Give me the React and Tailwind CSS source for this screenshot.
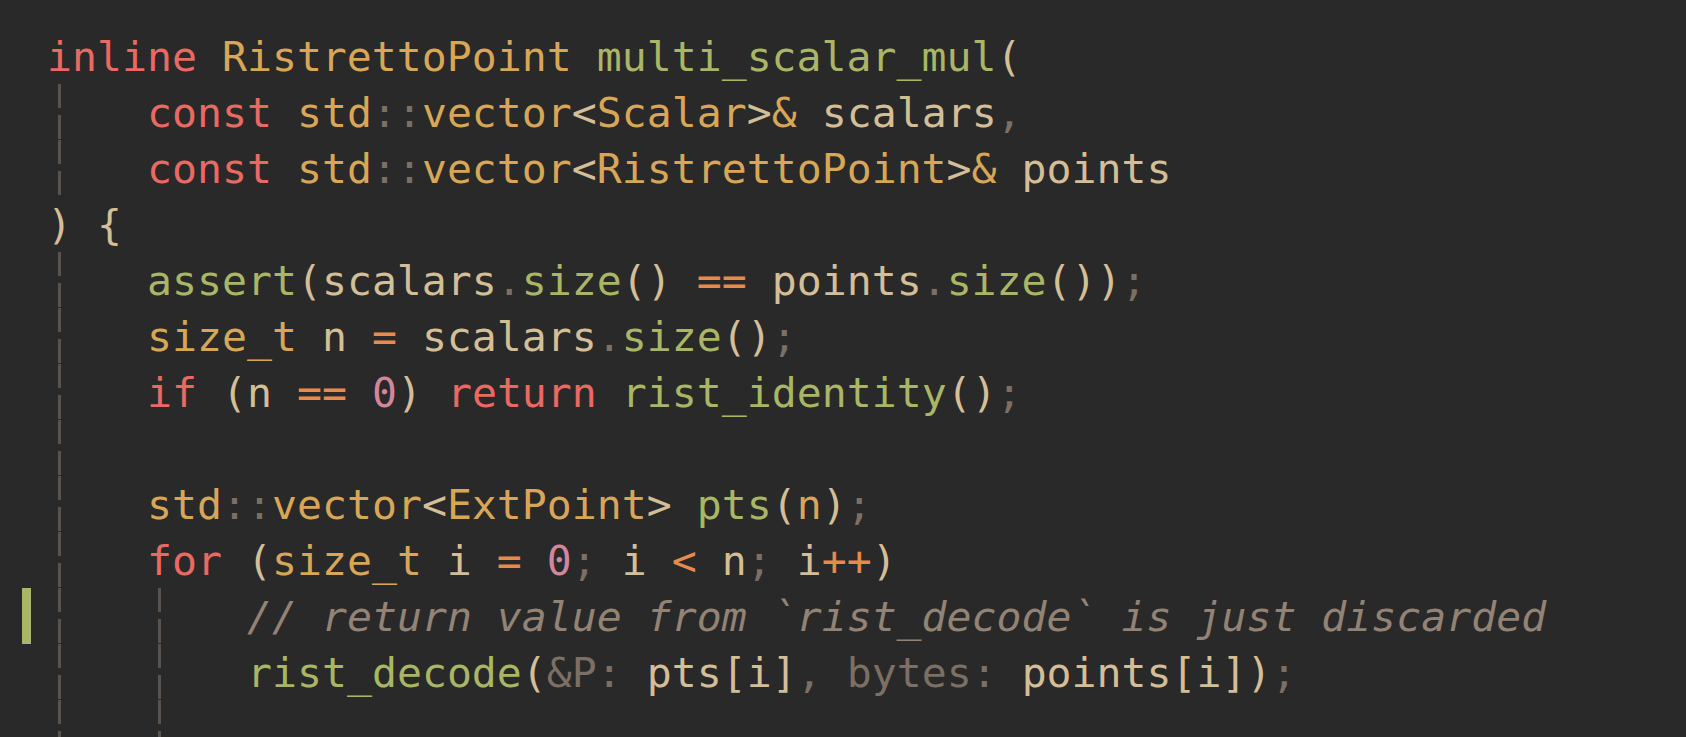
import React from "react";

// gruvbox-material-ish palette
const kw = "text-[#ea6962]";
const ty = "text-[#d8a657]";
const fn = "text-[#a9b665]";
const op = "text-[#e78a4e]";
const num = "text-[#d3869b]";
const fg = "text-[#d4be98]";
const pu = "text-[#7c6f64]";
const cm = "text-[#928374] italic";
const hint = "text-[#7c6f64]";

const lines = [
  { level: 0, tokens: [[kw, "inline"], [fg, " "], [ty, "RistrettoPoint"], [fg, " "], [fn, "multi_scalar_mul"], [fg, "("]] },
  {
    level: 1,
    tokens: [[kw, "const"], [fg, " "], [ty, "std"], [pu, "::"], [ty, "vector"], [fg, "<"], [ty, "Scalar"], [fg, ">"], [ty, "&"], [fg, " scalars"], [pu, ","]],
  },
  {
    level: 1,
    tokens: [[kw, "const"], [fg, " "], [ty, "std"], [pu, "::"], [ty, "vector"], [fg, "<"], [ty, "RistrettoPoint"], [fg, ">"], [ty, "&"], [fg, " points"]],
  },
  { level: 0, tokens: [[fg, ") {"]] },
  {
    level: 1,
    tokens: [[fn, "assert"], [fg, "(scalars"], [pu, "."], [fn, "size"], [fg, "() "], [op, "=="], [fg, " points"], [pu, "."], [fn, "size"], [fg, "())"], [pu, ";"]],
  },
  {
    level: 1,
    tokens: [[ty, "size_t"], [fg, " n "], [op, "="], [fg, " scalars"], [pu, "."], [fn, "size"], [fg, "()"], [pu, ";"]],
  },
  {
    level: 1,
    tokens: [[kw, "if"], [fg, " (n "], [op, "=="], [fg, " "], [num, "0"], [fg, ") "], [kw, "return"], [fg, " "], [fn, "rist_identity"], [fg, "()"], [pu, ";"]],
  },
  { level: 1, tokens: [] },
  {
    level: 1,
    tokens: [[ty, "std"], [pu, "::"], [ty, "vector"], [fg, "<"], [ty, "ExtPoint"], [fg, "> "], [fn, "pts"], [fg, "("], [ty, "n"], [fg, ")"], [pu, ";"]],
  },
  {
    level: 1,
    tokens: [
      [kw, "for"], [fg, " ("], [ty, "size_t"], [fg, " i "], [op, "="], [fg, " "], [num, "0"], [pu, ";"],
      [fg, " i "], [op, "<"], [fg, " n"], [pu, ";"], [fg, " i"], [op, "++"], [fg, ")"],
    ],
  },
  { level: 2, changed: true, tokens: [[cm, "// return value from `rist_decode` is just discarded"]] },
  {
    level: 2,
    tokens: [[fn, "rist_decode"], [fg, "("], [hint, "&P:"], [fg, " pts[i]"], [pu, ","], [fg, " "], [hint, "bytes:"], [fg, " points[i])"], [pu, ";"]],
  },
  { level: 2, tokens: [] },
];

const Guide = () => (
  <div className="flex w-[100px] shrink-0">
    <div className="w-[11px] shrink-0" />
    <div className="flex w-[3px] flex-col">
      <div className="h-[24px] bg-[#5a524c]" />
      <div className="h-[7px]" />
      <div className="h-[24px] bg-[#5a524c]" />
      <div className="h-[1px]" />
    </div>
  </div>
);

const CodeLine = ({ line }) => (
  <div className="flex h-[56px] items-start">
    <div className="w-[22px] shrink-0" />
    <div className={`h-[56px] w-[9px] shrink-0 ${line.changed ? "bg-[#a9b665]" : ""}`} />
    <div className="w-[16px] shrink-0" />
    {Array.from({ length: line.level }).map((_, i) => (
      <Guide key={i} />
    ))}
    <span className="whitespace-pre leading-[58px]">
      {line.tokens.map(([cls, text], i) => (
        <span key={i} className={cls}>
          {text}
        </span>
      ))}
    </span>
  </div>
);

export default function App() {
  return (
    <div className="h-[737px] w-full overflow-hidden bg-[#292929] pt-[28px] font-['DejaVu_Sans_Mono',monospace] text-[41.5px]">
      {lines.map((line, i) => (
        <CodeLine key={i} line={line} />
      ))}
    </div>
  );
}
